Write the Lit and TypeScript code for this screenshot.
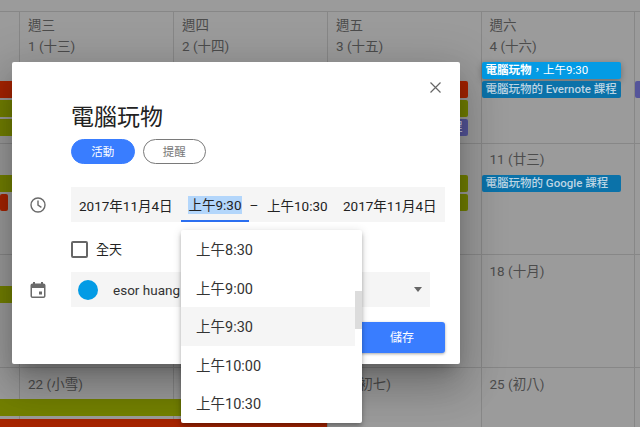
import { LitElement, html, css } from "lit";
import { customElement } from "lit/decorators.js";

const weeks = [
  { cls: "w1", labels: [["週三", "1 (十三)"], ["週四", "2 (十四)"], ["週五", "3 (十五)"], ["週六", "4 (十六)"]] },
  { cls: "w2", labels: [["8 (二十)"], ["9 (廿一)"], ["10 (廿二)"], ["11 (廿三)"]] },
  { cls: "w3", labels: [["15 (廿七)"], ["16 (廿八)"], ["17 (廿九)"], ["18 (十月)"]] },
  { cls: "w4", labels: [["22 (小雪)"], ["23 (初六)"], ["24 (初七)"], ["25 (初八)"]] },
];

const times = ["上午8:30", "上午9:00", "上午9:30", "上午10:00", "上午10:30"];

@customElement("app-root")
export class AppRoot extends LitElement {
  static styles = css`
    :host {
      display: block;
      position: relative;
      width: 640px;
      height: 427px;
      overflow: hidden;
      background: #9b9b9b;
      font-family: Roboto, "Noto Sans CJK TC", sans-serif;
      color: #222;
    }
    .cal { display: flex; flex-direction: column; padding-top: 11px; height: 416px; }
    .week {
      display: grid;
      grid-template-columns: 19px 154px 154px 153.5px 153px 6.5px;
      grid-auto-rows: 19px;
      border-top: 1px solid #878787;
      align-content: start;
      overflow: hidden;
      box-sizing: border-box;
    }
    .w1 { height: 132px; grid-template-rows: 50px 19px 19px 19px; }
    .w2 { height: 112px; grid-template-rows: 31px 19px 19px; }
    .w3 { height: 113px; grid-template-rows: 31px 19px; }
    .w4 { height: 60px; grid-template-rows: 31px 20px 19px; }
    .line {
      grid-row: 1 / 20;
      border-left: 1px solid #878787;
    }
    .l1 { grid-column: 2; } .l2 { grid-column: 3; } .l3 { grid-column: 4; } .l4 { grid-column: 5; } .l5 { grid-column: 6; }
    .label {
      grid-row: 1;
      padding: 5px 0 0 9px;
      font-size: 13.5px;
      line-height: 20.5px;
      color: #4c4c4c;
      white-space: nowrap;
    }
    .w1 .label { padding-top: 3px; }
    .w3 .label, .w4 .label { padding-top: 6px; }
    .c1 { grid-column: 2; } .c2 { grid-column: 3; } .c3 { grid-column: 4; } .c4 { grid-column: 5; } .c5 { grid-column: 6; }
    .ev {
      height: 17px;
      margin: 0 13px 0 1px;
      border-radius: 2px;
      font-size: 11.5px;
      font-weight: 500;
      line-height: 17px;
      padding: 0 4px;
      white-space: nowrap;
      overflow: hidden;
      box-sizing: border-box;
      color: #bcd5e4;
      z-index: 1;
    }
    .red { background: #a62400; }
    .olive { background: #738000; }
    .blue { background: #0b72a9; }
    .purple { background: #55559a; }
    .sel {
      background: #039be5;
      color: #fff;
      font-weight: 400;
      box-shadow: 0 2px 6px rgba(0, 0, 0, 0.3);
    }
    .sel b { font-weight: 700; }
    .from0 { margin-left: 0; border-radius: 0 2px 2px 0; }
    .end { text-align: right; padding-right: 5px; color: #c8c8e0; }
    .r2 { grid-row: 2; } .r3 { grid-row: 3; } .r4 { grid-row: 4; } .r5 { grid-row: 5; }
    .span-a { grid-column: 1 / 5; }
    .tiny { grid-column: 1; margin: 0 11px 0 0; }
    .edge { grid-column: 1; margin: 0; border-radius: 0; }
    .wide { grid-column: 1 / 4; margin: 0; border-radius: 0; }
    .peek { margin: 0 0 0 1px; border-radius: 2px 0 0 2px; padding: 0; }

    .modal {
      position: absolute;
      left: 12px;
      top: 62px;
      width: 448px;
      height: 302px;
      box-sizing: border-box;
      padding: 31px 15px 0 59px;
      background: #fff;
      border-radius: 2px;
      box-shadow: 0 24px 38px 3px rgba(0, 0, 0, 0.16), 0 9px 46px 8px rgba(0, 0, 0, 0.14), 0 11px 15px -7px rgba(0, 0, 0, 0.22);
      display: flex;
      flex-direction: column;
      z-index: 2;
    }
    .close {
      position: absolute;
      right: 19px;
      top: 19.5px;
      width: 11px;
      height: 11px;
    }
    .title {
      font-size: 23px;
      line-height: 44px;
      height: 44px;
      color: #222;
      font-family: "Noto Sans CJK TC", sans-serif;
    }
    .tabs { display: flex; gap: 8px; margin-top: 2px; }
    .tab {
      width: 63.5px;
      height: 25px;
      box-sizing: border-box;
      border-radius: 13px;
      font-size: 11.5px;
      line-height: 23px;
      text-align: center;
      font-family: "Noto Sans CJK TC", sans-serif;
    }
    .tab.on { background: #397dff; color: #fff; border: 1px solid #397dff; }
    .tab.off { border: 1px solid #7a7a7a; color: #777; }

    .row { position: relative; display: flex; }
    .ico { position: absolute; left: -41px; width: 16px; height: 16px; top: 10px; }
    .time {
      margin-top: 23px;
      height: 35px;
      background: #f5f5f5;
      align-items: center;
      font-size: 13.5px;
      color: #222;
      white-space: nowrap;
    }
    .d1 { width: 110px; padding-left: 8px; box-sizing: border-box; }
    .picker {
      position: relative;
      width: 68px;
      height: 35px;
      line-height: 36px;
      text-align: center;
    }
    .under {
      position: absolute;
      left: 0; right: 0; bottom: 0;
      height: 2px;
      background: #2b6ff0;
    }
    .hl { background: #b3d6fb; padding: 1px 0; }
    .dash { width: 10px; text-align: center; }
    .t2 { width: 84px; padding-left: 8px; box-sizing: border-box; }
    .d2 { width: 101px; }

    .allday { margin-top: 19px; height: 17px; align-items: center; gap: 8px; font-size: 13px; }
    .allday span { padding-bottom: 3px; }
    .box {
      width: 17px;
      height: 17px;
      box-sizing: border-box;
      border: 2px solid #666;
      border-radius: 2px;
    }
    .calrow {
      margin-top: 14px;
      width: 359px;
      height: 35px;
      background: #f5f5f5;
      align-items: center;
      font-size: 13.5px;
      color: #333;
      padding-left: 7px;
      box-sizing: border-box;
    }
    .dot { width: 20px; height: 20px; border-radius: 50%; background: #039be5; margin-right: 15px; }
    .name { flex: 1; }
    .caret {
      width: 0; height: 0;
      border-left: 4.5px solid transparent;
      border-right: 4.5px solid transparent;
      border-top: 5px solid #666;
      margin-right: 8px;
    }
    .foot { display: flex; justify-content: flex-end; margin-top: 15px; }
    .save {
      width: 100px;
      height: 31px;
      border-radius: 3px;
      background: #397dff;
      color: #fff;
      font-size: 12px;
      line-height: 30px;
      text-align: right;
      padding-right: 31px;
      box-sizing: border-box;
      box-shadow: 0 1px 3px rgba(0, 0, 0, 0.35);
      font-family: "Noto Sans CJK TC", sans-serif;
    }
    .menu {
      position: absolute;
      left: 0;
      top: 43px;
      width: 181px;
      height: 193px;
      padding-right: 7px;
      box-sizing: border-box;
      background: #fff;
      border-radius: 2px;
      box-shadow: 0 2px 4px -1px rgba(0, 0, 0, 0.2), 0 4px 5px rgba(0, 0, 0, 0.14), 0 1px 10px rgba(0, 0, 0, 0.12);
      text-align: left;
      z-index: 3;
    }
    .item {
      height: 38.6px;
      line-height: 41.6px;
      padding-left: 15px;
      font-size: 14.5px;
      color: #333;
    }
    .item.cur { background: #f5f5f5; }
    .thumb {
      position: absolute;
      right: 0;
      top: 61px;
      width: 7.5px;
      height: 38px;
      background: #dcdcdc;
    }
  `;

  private renderEvents(cls: string) {
    switch (cls) {
      case "w1":
        return html`
          <div class="ev sel c4 r2"><b>電腦玩物</b>，上午9:30</div>
          <div class="ev red span-a from0 r3"></div>
          <div class="ev blue c4 r3">電腦玩物的 Evernote 課程</div>
          <div class="ev purple c5 r3 peek"></div>
          <div class="ev olive span-a from0 r4"></div>
          <div class="ev olive edge r5"></div>
          <div class="ev purple c3 end r5">課程</div>`;
      case "w2":
        return html`
          <div class="ev olive span-a from0 r2"></div>
          <div class="ev blue c4 r2">電腦玩物的 Google 課程</div>
          <div class="ev red tiny r3"></div>
          <div class="ev olive c3 r3"></div>`;
      case "w3":
        return html`<div class="ev olive edge r2"></div>`;
      default:
        return html`
          <div class="ev olive wide r2"></div>
          <div class="ev red wide r3"></div>`;
    }
  }

  render() {
    return html`
      <div class="cal">
        ${weeks.map(
          (w) => html`
            <section class="week ${w.cls}">
              <div class="line l1"></div><div class="line l2"></div><div class="line l3"></div><div class="line l4"></div><div class="line l5"></div>
              ${w.labels.map(
                (l, i) => html`<div class="label c${i + 1}">${l.map((t) => html`<div>${t}</div>`)}</div>`
              )}
              ${this.renderEvents(w.cls)}
            </section>`
        )}
      </div>

      <div class="modal">
        <svg class="close" viewBox="0 0 11 11" fill="none" stroke="#666" stroke-width="1.2">
          <path d="M0.5 0.5 L10.5 10.5 M10.5 0.5 L0.5 10.5"></path>
        </svg>
        <div class="title">電腦玩物</div>
        <div class="tabs">
          <div class="tab on">活動</div>
          <div class="tab off">提醒</div>
        </div>

        <div class="row time">
          <svg class="ico" viewBox="0 0 16 16" fill="none" stroke="#6a6a6a" stroke-width="1.4">
            <circle cx="8" cy="8" r="7"></circle>
            <path d="M8 3.6 V8.2 L11.4 10.4"></path>
          </svg>
          <div class="d1">2017年11月4日</div>
          <div class="picker"><span class="hl">上午9:30</span><div class="under"></div>
            <div class="menu">
              ${times.map((t, i) => html`<div class="item ${i === 2 ? "cur" : ""}">${t}</div>`)}
              <div class="thumb"></div>
            </div>
          </div>
          <div class="dash">–</div>
          <div class="t2">上午10:30</div>
          <div class="d2">2017年11月4日</div>
        </div>

        <div class="row allday"><div class="box"></div><span>全天</span></div>

        <div class="row calrow">
          <svg class="ico" viewBox="1.5 1 15 16">
            <path fill="#6a6a6a" d="M14.5 2.5H14V1h-2v1.5H6V1H4v1.5h-.5C2.4 2.5 1.5 3.4 1.5 4.5v10.5c0 1.1.9 2 2 2h11c1.1 0 2-.9 2-2V4.5c0-1.1-.9-2-2-2zM15 15c0 .3-.2.5-.5.5h-11A.5.5 0 0 1 3 15V7h12v8z"></path>
            <rect fill="#6a6a6a" x="10" y="10.5" width="3" height="3"></rect>
          </svg>
          <div class="dot"></div>
          <div class="name">esor huang</div>
          <div class="caret"></div>
        </div>

        <div class="foot"><div class="save">儲存</div></div>
      </div>
    `;
  }
}
